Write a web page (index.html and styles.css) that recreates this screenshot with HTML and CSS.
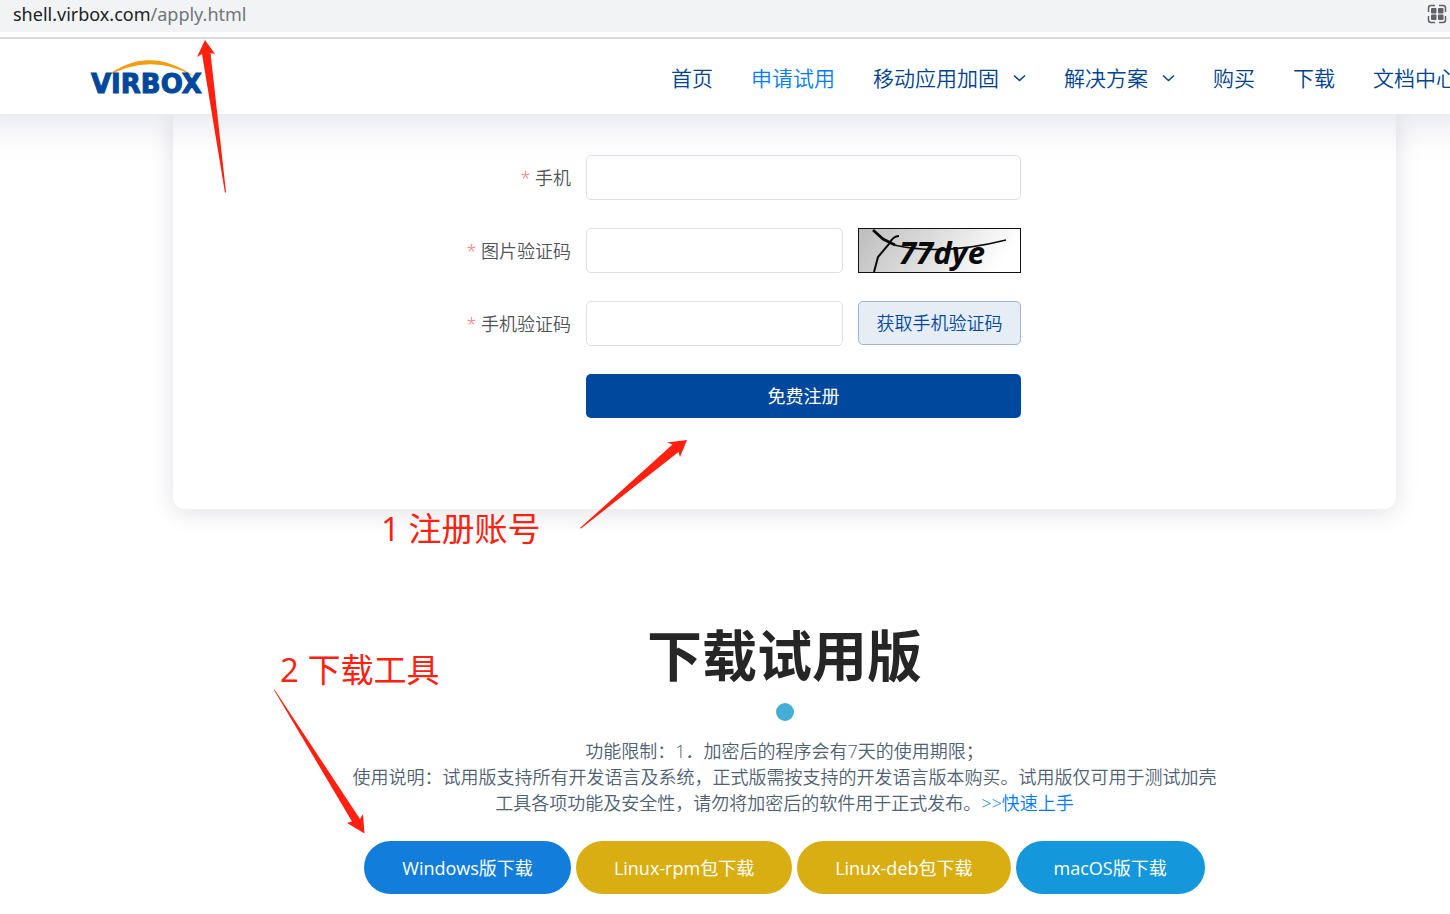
FILE: index.html
```html
<!DOCTYPE html>
<html lang="zh-CN">
<head>
<meta charset="utf-8">
<title>Virbox</title>
<link rel="stylesheet" href="styles.css">
</head>
<body>
<div class="page">
  <div class="address-bar">
    <span class="url">shell.virbox.com<span class="url-path">/apply.html</span></span>
    <svg class="qr-icon" width="20" height="20" viewBox="0 0 20 20" fill="none" stroke="#5f6368">
      <path d="M1.500 8V4Q1.500 1.500 4 1.500H8M12 1.500H16Q18.500 1.500 18.500 4V8M18.500 12V16Q18.500 18.500 16 18.500H12M8 18.500H4Q1.500 18.500 1.500 16V12" stroke-width="1.500"/>
      <g fill="#5f6368" stroke="none"><rect x="4" y="4" width="5.500" height="5.500" rx="1"/><rect x="11" y="4" width="5.500" height="5.500" rx="1"/><rect x="4" y="10.500" width="5.500" height="5.500" rx="1"/><rect x="11" y="10.500" width="5.500" height="5.500" rx="1"/></g>
    </svg>
  </div>
  <header class="site-header">
    <a class="logo" href="#" aria-label="Virbox">
      <svg width="118" height="44" viewBox="0 -4 118 44">
        <path d="M14 19Q58-16 105 18Q60-8 14 19Z" fill="#f59c0c"/>
        <text class="logo-text" x="1" y="34">VIRBOX</text>
      </svg>
    </a>
    <nav class="nav">
      <a href="#">首页</a>
      <a class="active" href="#">申请试用</a>
      <a href="#">移动应用加固<svg class="chevron" width="13" height="8" viewBox="0 0 13 8"><path d="M1 1.500L6.500 6.500L12 1.500"/></svg></a>
      <a href="#">解决方案<svg class="chevron" width="13" height="8" viewBox="0 0 13 8"><path d="M1 1.500L6.500 6.500L12 1.500"/></svg></a>
      <a href="#">购买</a>
      <a href="#">下载</a>
      <a href="#">文档中心</a>
    </nav>
  </header>
  <main class="main">
    <form class="card">
      <div class="row">
        <label for="phone"><span class="star">*</span> 手机</label>
        <input id="phone" type="tel">
      </div>
      <div class="row">
        <label for="captcha"><span class="star">*</span> 图片验证码</label>
        <input id="captcha" type="text">
        <svg class="captcha" viewBox="0 0 163 45" role="img" aria-label="Y77dye">
          <defs><linearGradient id="shade" x1="0" y1="0" x2="1" y2="0.200"><stop offset="0" stop-color="#bcbcbc"/><stop offset="1" stop-color="#fff"/></linearGradient></defs>
          <rect x="0.500" y="0.500" width="162" height="44" fill="url(#shade)" stroke="#111"/>
          <g fill="none" stroke="#0a0a0a">
            <path d="M15 2L25 11L37 17" stroke-width="2.800"/>
            <path d="M41 8Q35 8 31 16L20 29L16 44" stroke-width="2"/>
            <path d="M36 17Q85 28 148 12" stroke-width="1.500"/>
          </g>
          <text class="captcha-text" x="41" y="36">77dye</text>
        </svg>
      </div>
      <div class="row">
        <label for="code"><span class="star">*</span> 手机验证码</label>
        <input id="code" type="text">
        <button class="get-code" type="button">获取手机验证码</button>
      </div>
      <div class="row">
        <button class="submit" type="button">免费注册</button>
      </div>
    </form>
    <section class="download">
      <h2>下载试用版</h2>
      <div class="dot"></div>
      <p>功能限制：1．加密后的程序会有7天的使用期限；<br>使用说明：试用版支持所有开发语言及系统，正式版需按支持的开发语言版本购买。试用版仅可用于测试加壳<br>工具各项功能及安全性，请勿将加密后的软件用于正式发布。<a href="#">&gt;&gt;快速上手</a></p>
      <div class="buttons">
        <a class="pill windows" href="#">Windows版下载</a>
        <a class="pill linux" href="#">Linux-rpm包下载</a>
        <a class="pill linux" href="#">Linux-deb包下载</a>
        <a class="pill mac" href="#">macOS版下载</a>
      </div>
    </section>
  </main>
  <svg class="arrows" width="1450" height="914" viewBox="0 0 1450 914" fill="#ff2010">
    <path d="M205 40L215 54L210.500 53L226 192L225 193L202 54L197 57Z"/>
    <path d="M687 440L680 457L678.500 452L581 528.500L580 528L672.500 444.500L667 442.500Z"/>
    <path d="M364.500 833.500L363 814L360 819L274.500 689.500L274 690L352 821.500L347 823Z"/>
  </svg>
  <div class="note note-register">1 注册账号</div>
  <div class="note note-download">2 下载工具</div>
</div>
</body>
</html>
```
FILE: styles.css
```css
* { box-sizing: border-box; }
body {
  margin: 0;
  background: #fff;
  font-family: "Open Sans", "Noto Sans CJK SC", sans-serif;
  font-size: 18px;
  font-weight: 350;
}
a { text-decoration: none; }
.page { position: relative; overflow: hidden; min-height: 100vh; }
.address-bar {
  position: relative;
  z-index: 2;
  display: flex;
  align-items: center;
  justify-content: space-between;
  height: 37px;
  padding: 0 3px 4px 13px;
  border-bottom: 5px solid #fff;
  background: #f1f3f4;
}
.url { font-family: "Noto Sans", sans-serif; font-size: 18px; font-weight: 400; line-height: 28px; color: #202124; }
.url-path { color: #70757a; }
.site-header {
  position: relative;
  z-index: 1;
  display: flex;
  align-items: center;
  justify-content: space-between;
  height: 77px;
  padding-left: 90px;
  border-top: 2px solid #dadbe1;
  background: #fff;
  box-shadow: 0 -32px 40px 40px rgba(10, 25, 75, 0.12);
}
.logo { display: flex; }
.logo-text {
  font: bold 26px "DejaVu Sans", sans-serif;
  fill: #00489d;
  stroke: #00489d;
}
.nav {
  display: flex;
  flex: none;
  gap: 38px;
  margin-right: -7px;
  padding-top: 3px;
  font-size: 21px;
  line-height: 30px;
}
.nav a { display: flex; align-items: center; gap: 14px; color: #00428e; white-space: nowrap; }
.nav .active { color: #007bff; }
.chevron { fill: none; stroke: #00428e; stroke-width: 1.5; }
.main { padding: 0 54px 0 173px; }
.card {
  display: flex;
  flex-direction: column;
  gap: 28px;
  padding: 41px 375px 91px 0;
  border-radius: 0 0 12px 12px;
  background: #fff;
  box-shadow: 0 4px 24px rgba(10, 15, 50, 0.12);
}
.row { display: flex; justify-content: flex-end; gap: 15px; }
.row label { flex: 1; line-height: 46px; height: 45px; text-align: right; color: #505358; }
.star { color: #f56c6c; }
.row input {
  width: 257px;
  height: 45px;
  padding: 0 15px;
  border: 1px solid #dcdfe6;
  border-radius: 5px;
  background: #fff;
  font: inherit;
}
.row #phone { width: 435px; }
.captcha { width: 163px; height: 45px; }
.captcha-text { font: italic bold 31px "Open Sans", sans-serif; fill: #0a0a0a; }
.row button { height: 44px; padding: 0 0 2px; border-radius: 5px; font: inherit; }
.get-code { width: 163px; border: 1px solid #99b5d8; background: #e6edf5; color: #00489d; }
.submit { width: 435px; border: 0; background: #00489d; color: #fff; }
.row .submit { font-weight: 400; }
.download { margin-top: 113px; text-align: center; }
.download h2 { margin: 0; font-size: 55px; font-weight: 700; line-height: 66px; color: #262626; }
.dot { width: 18px; height: 18px; margin: 15px auto 17px; border-radius: 50%; background: #45aed6; }
.download p { margin: 0; line-height: 26px; color: #506172; }
.download p a { color: #007bff; }
.buttons { display: flex; justify-content: center; gap: 5px; margin-top: 25px; }
.pill { padding: 1px 38px 0; border-radius: 27px; font-weight: 400; line-height: 52px; color: #fff; white-space: nowrap; }
.windows { background: #127ddb; }
.linux { background: #d9ae13; }
.mac { background: #1498db; }
.arrows { position: absolute; z-index: 2; top: 0; left: 0; pointer-events: none; }
.note { position: absolute; z-index: 2; font-size: 33px; font-weight: 400; line-height: 40px; color: #ff2010; }
.note-register { top: 509px; left: 381px; }
.note-download { top: 650px; left: 280px; }
```
